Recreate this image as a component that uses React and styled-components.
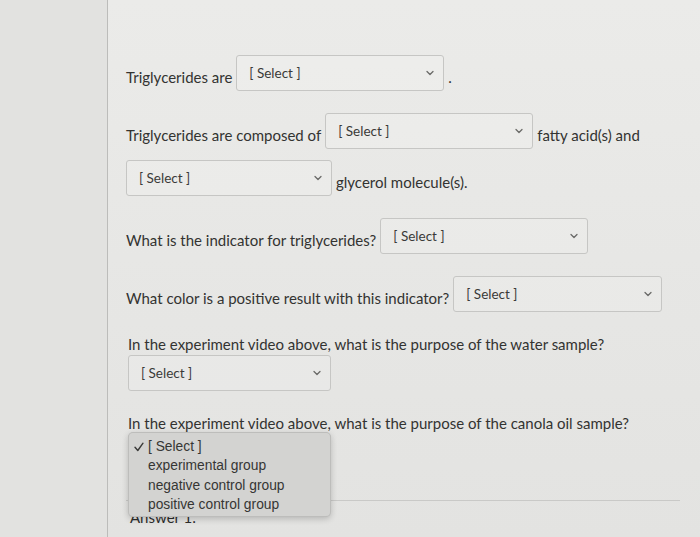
import React from 'react'
import styled, { createGlobalStyle } from 'styled-components'

const GlobalStyle = createGlobalStyle`
    html, body {
        margin: 0;
        padding: 0;
    }
    body {
        font-family: Lato, "Open Sans", sans-serif;
        color: #333331;
        background: #e7e7e5;
    }
`

const Page = styled.div`
    display: flex;
    height: 537px;
    overflow: hidden;
    background: linear-gradient(180deg, #ebebe9 0%, #e6e6e4 60%, #e3e3e1 100%);
`

const Sidebar = styled.div`
    width: 107px;
    flex-shrink: 0;
    background: #e2e2e0;
    border-right: 1px solid #bcbcba;
`

const Main = styled.div`
    width: 555px;
    padding: 55px 0 0 18px;
`

const Question = styled.div`
    display: flex;
    flex-wrap: wrap;
    flex-direction: ${p => (p.$stacked ? 'column' : 'row')};
    align-items: ${p => (p.$stacked ? 'flex-start' : 'center')};
    column-gap: 4px;
    row-gap: ${p => (p.$stacked ? '1px' : '11px')};
    margin-bottom: ${p => p.$last ? '30px' : '22px'};
    padding-left: ${p => (p.$stacked ? '2px' : '0')};
`

const Label = styled.span`
    font-size: 15px;
    line-height: 20px;
    margin-top: ${p => (p.$stacked ? '0' : '8px')};
    white-space: nowrap;
`

const SelectWrap = styled.div`
    position: relative;
`

const SelectBox = styled.div`
    box-sizing: border-box;
    width: ${p => p.$width || 208}px;
    height: 36px;
    display: flex;
    align-items: center;
    justify-content: space-between;
    padding: 0 9px 0 12px;
    border: 1px solid #c6c6c4;
    border-radius: 3px;
    background: rgba(255, 255, 255, 0.14);
    font-size: 13.5px;
    color: #3a3a38;
`

const Chevron = () => (
    <svg width="8" height="6" viewBox="0 0 8 6">
        <polyline points="1,1.5 4,4.5 7,1.5" fill="none" stroke="#6a6a68" strokeWidth="1.3" strokeLinecap="round" strokeLinejoin="round" />
    </svg>
)

// open native-style option list, sits over the closed select
const Menu = styled.ul`
    position: absolute;
    top: -2px;
    left: 0;
    z-index: 2;
    box-sizing: border-box;
    width: 203px;
    height: 85px;
    margin: 0;
    padding: 4px 0 4px;
    list-style: none;
    background: #d3d3d1;
    border: 1px solid rgba(0, 0, 0, 0.1);
    border-radius: 5px;
    box-shadow: 0 2px 6px rgba(0, 0, 0, 0.2);
    font-family: "Liberation Sans", Arial, sans-serif;
    font-size: 13.8px;
    color: #363634;
`

const MenuItem = styled.li`
    position: relative;
    height: 19.3px;
    line-height: 19.3px;
    padding-left: 19px;
`

const Check = styled.svg`
    position: absolute;
    left: 5px;
    top: 5px;
`

const Divider = styled.div`
    height: 1px;
    width: 554px;
    background: #c9c9c7;
    margin-bottom: 7px;
`

const AnswerLabel = styled.div`
    font-size: 15px;
    line-height: 18px;
    padding-left: 4px;
    color: #2e2e2c;
`

const Dropdown = ({ width, options }) => (
    <SelectWrap>
        <SelectBox $width={width}>
            <span>[ Select ]</span>
            <Chevron />
        </SelectBox>
        {options && (
            <Menu>
                {options.map((opt, i) => (
                    <MenuItem key={opt}>
                        {i === 0 && (
                            <Check width="10" height="10" viewBox="0 0 10 10">
                                <polyline points="1,5.2 3.8,8.5 9,1.2" fill="none" stroke="#3a3a38" strokeWidth="1.4" strokeLinecap="round" strokeLinejoin="round" />
                            </Check>
                        )}
                        {opt}
                    </MenuItem>
                ))}
            </Menu>
        )}
    </SelectWrap>
)

const groups = ['[ Select ]', 'experimental group', 'negative control group', 'positive control group']

export default function App() {
    return (
        <>
            <GlobalStyle />
            <Page>
                <Sidebar />
                <Main>
                    <Question>
                        <Label>Triglycerides are</Label>
                        <Dropdown />
                        <Label>.</Label>
                    </Question>

                    <Question>
                        <Label>Triglycerides are composed of</Label>
                        <Dropdown />
                        <Label>fatty acid(s) and</Label>
                        <Dropdown width={206} />
                        <Label>glycerol molecule(s).</Label>
                    </Question>

                    <Question>
                        <Label>What is the indicator for triglycerides?</Label>
                        <Dropdown />
                    </Question>

                    <Question>
                        <Label>What color is a positive result with this indicator?</Label>
                        <Dropdown width={209} />
                    </Question>

                    <Question $stacked>
                        <Label $stacked>In the experiment video above, what is the purpose of the water sample?</Label>
                        <Dropdown width={203} />
                    </Question>

                    <Question $stacked $last>
                        <Label $stacked>In the experiment video above, what is the purpose of the canola oil sample?</Label>
                        <Dropdown width={203} options={groups} />
                    </Question>

                    <Divider />
                    <AnswerLabel>Answer 1:</AnswerLabel>
                </Main>
            </Page>
        </>
    )
}
